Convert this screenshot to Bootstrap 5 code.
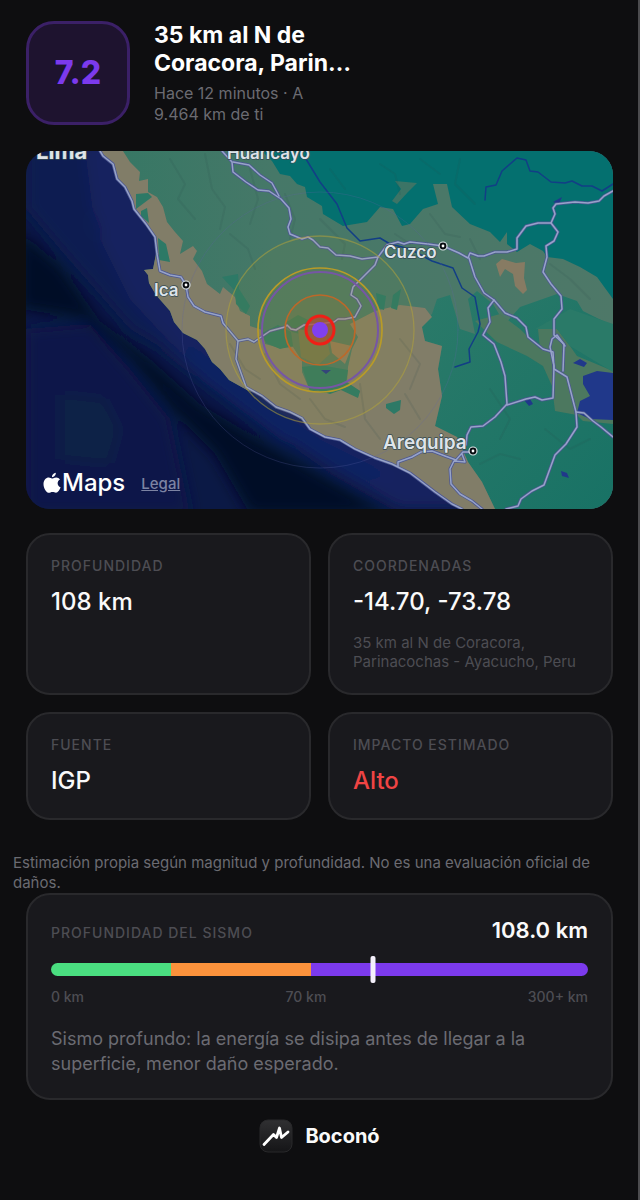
<!DOCTYPE html>
<html lang="es" data-bs-theme="dark">
<head>
<meta charset="utf-8">
<meta name="viewport" content="width=device-width, initial-scale=1">
<title>Boconó</title>
<link href="https://cdn.jsdelivr.net/npm/bootstrap@5.3.0/dist/css/bootstrap.min.css" rel="stylesheet">
<style>
body{background:#0e0e10;color:#fafafa;font-family:Inter,"Liberation Sans",sans-serif;border-right:2px solid #4b4b4e;min-height:100vh}
.page{padding:21px 25px 40px 26px}
.magnitude{width:104px;height:104px;border:3px solid #3b2067;border-radius:28px;background:#1e132f;color:#7c3aed;font-size:32px;font-weight:800;flex:none}
.place{max-width:212px}
.place h1{font-size:23px;line-height:28px;font-weight:700;margin:0 0 6px}
.ago{font-size:16px;line-height:21px;color:#6b6b72;margin:0;max-width:170px}
.map-box{border-radius:24px;overflow:hidden;margin-top:26px}
.map-box svg.terrain{display:block;width:100%;height:auto}
.map-brand{left:16px;bottom:12px;gap:16px}
.map-word{font-size:24px;line-height:28px;font-weight:500;color:#fff}
.legal{font-size:15px;font-weight:500;color:#7c83a3;padding-top:3px}
.tiles{gap:17px;margin-top:24px;display:grid;grid-template-columns:1fr 1fr}
.panel{background:#19191d;border:2px solid #29292c;border-radius:24px;padding:22px 23px}
.cap{font-size:14px;line-height:18px;font-weight:500;letter-spacing:1px;color:#4d4d53;margin:0;text-transform:uppercase}
.fact{font-size:24px;line-height:30px;font-weight:500;margin:12px 0 0}
.danger-text{color:#ef4444}
.where{font-size:15px;line-height:19px;color:#4d4d53;margin:16px 0 0}
.note{font-size:15px;line-height:20px;color:#6b6b72;margin:33px -12px 0 -13px;padding-right:24px}
.depth-now{font-size:22px;line-height:26px;font-weight:600}
.scale-bar{height:13px;margin-top:20px}
.scale-bar .zones{border-radius:7px;overflow:hidden;height:13px}
.shallow{background:#4ade80}.middle{background:#fb923c}.deep{background:#7c3aed}
.pin{top:-7px;width:5px;height:27px;border-radius:2px;background:#f4f0fb;transform:translateX(-50%)}
.ticks{font-size:14px;line-height:18px;font-weight:500;color:#4d4d53;margin-top:12px}
.explain{font-size:18px;line-height:25px;color:#6b6b72;margin:20px 0 0}
.brand-row{gap:12px;margin-top:19px;font-size:20px;line-height:28px;font-weight:700}
</style>
</head>
<body>
<main class="page container-fluid">
  <header class="d-flex gap-4">
    <div class="magnitude d-flex align-items-center justify-content-center">7.2</div>
    <div class="place">
      <h1>35 km al N de Coracora, Parin…</h1>
      <p class="ago">Hace 12 minutos · A 9.464 km de ti</p>
    </div>
  </header>

  <section class="map-box position-relative" aria-label="Mapa del epicentro">
    <svg class="terrain" viewBox="26 152 587 358" font-family="Inter, 'Liberation Sans', sans-serif" font-weight="600" fill="none" stroke-linejoin="round" stroke-linecap="round">
      <defs>
        <filter id="soft" x="-20%" y="-20%" width="140%" height="140%"><feGaussianBlur stdDeviation="7"/></filter>
        <clipPath id="land"><path d="M100 152 113 167 117 180 125 188 132 202 134 210 146 225 155 238 156 255 153 270 144 271 148 276 149 284 156 296 163 304 170 312 174 323 183 334 197 341 205 350 212 363 220 370 229 381 247 391 262 397 276 408 290 413 302 421 310 430 325 438 340 441 355 450 375 459 392 465 410 474 418 480 435 493 452 505 462 510H613V152Z"/></clipPath>
        <linearGradient id="hills" x1="0" y1="0" x2="1" y2="0"><stop offset="0" stop-color="#347764"/><stop offset=".35" stop-color="#467868"/><stop offset="1" stop-color="#4e7868"/></linearGradient>
        <linearGradient id="yungas" x1="0" y1="0" x2="1" y2="1"><stop offset="0" stop-color="#2b7a69"/><stop offset="1" stop-color="#187265"/></linearGradient>
      </defs>
      <!-- ocean -->
      <path fill="#0b1945" d="M26 152H613V510H26Z"/>
      <g filter="url(#soft)">
        <path fill="#18225f" d="M75 140 100 240 105 280 150 340 240 410 330 470 400 510H470L400 440 240 350 170 290 160 230 110 140Z"/>
        <path fill="#0d1c51" d="M26 145 85 150 95 230 130 300 190 365 130 330 60 250 26 210Z"/>
        <path fill="#020b27" d="M20 232 62 268 100 322 150 360 200 405 250 435 320 475 390 515H250L215 455 175 415 130 360 85 320 20 310Z"/>
        <path fill="#0f1748" d="M26 330 90 325 130 370 170 420 190 515H26Z"/>
        <path fill="#0c2347" d="M60 395 105 400 120 430 110 465 60 460Z"/>
        <path fill="#102164" d="M180 335 240 385 320 440 400 480 370 480 280 440 200 380Z"/>
      </g>
      <!-- land cover -->
      <g clip-path="url(#land)">
        <path fill="url(#hills)" d="M90 152H613V510H90Z"/>
        <path fill="#04706f" d="M262 152 272 162 280 175 290 177 297 185 305 188 307 198 322 207 323 215 343 227 367 223 380 208 393 210 402 227 410 225 423 210 438 205 433 185H447L452 208 470 225 490 233 500 243 507 233V245L517 253 530 245 543 252 547 258 563 260 580 268 597 278 613 300V152Z"/>
        <path fill="#3c7466" d="M395 182 417 184 408 193 397 205 392 202 401 190Z"/>
        <path fill="url(#yungas)" d="M437 300 450 296 460 330 475 335 468 300 477 292 493 305 505 325 520 308 557 295 577 302 583 312 613 327V510H495L482 483 468 463 457 438 435 427 442 397 438 370 442 347 425 342 420 325 432 315Z"/>
        <path fill="#4c785f" d="M475 322 497 343 527 357 543 367 552 387 555 412 577 416 583 422 613 425V372L577 357 570 347 557 330 538 330 540 350 520 330 500 315Z"/>
        <path fill="#2a7a68" d="M535 330H557L570 347 613 373V325L570 310Z"/>
        <path fill="#817d68" d="M90 152H123L130 163 140 173 139 182 148 180V193L157 198 163 208 167 223 175 233 183 242 180 255 193 247 197 252 193 260 202 272 207 285 220 295 223 288 235 298 240 312 250 317 250 327 262 331 265 345 280 349 293 348 302 362V373L310 392 325 394 342 387 358 398 360 392 347 383 348 368 352 350 358 338 350 325 375 312 400 306 425 309 432 318 422 328 425 342 442 347 438 370 442 397 435 427 457 438 468 463 482 483 495 510H90Z"/>
        <g fill="#2d7966">
          <path d="M136 195 148 194 152 198 136 210ZM141 212 147 209 149 224 141 217ZM158 239 166 245 170 263 159 261Z"/>
          <path d="M222 278 238 275 239 290 250 307 246 315 236 305 235 292ZM262 334 278 326 291 333 293 347 280 350 266 344Z"/>
          <path d="M302 368 320 366 348 371 346 383 360 392 358 399 341 391 330 395 318 391 310 392ZM386 405 401 401 400 411 394 415 386 409Z"/>
          <path d="M285 324 298 316 310 322 300 335 292 333ZM376 294 386 297 384 311 378 309ZM393 296 401 290 397 311 391 309Z"/>
        </g>
        <path fill="#64775a" d="M298 330 326 335 330 355 318 366 301 358Z"/>
        <path fill="#877b63" d="M496 265 502 260 516 264 525 263 524 279 527 291 523 295 515 287 513 275 505 270 500 278ZM330 342 352 347 345 365 332 354Z"/>
        <!-- relief shading -->
        <g stroke="#264e46" stroke-opacity=".12" stroke-width="2">
          <path d="M170 160 185 185 178 200 195 220M205 155 212 190 225 208 220 230M250 170 258 200 250 225M285 195 295 220 290 240M230 235 248 250 255 270M320 220 345 245 342 260M395 235 410 245M430 215 445 235 460 238M470 240 480 260M550 265 570 280 590 300"/>
          <path d="M230 345 245 370 260 380M265 355 280 385 300 400M310 400 325 420 345 428M360 385 365 420 380 440M400 340 420 365 410 390M405 395 420 420M490 390 510 420 500 440M480 465 500 455 520 460M545 430 570 450 590 440"/>
          <path d="M380 165 395 175 400 195M420 160 440 175M460 160 455 185 475 205M330 170 345 190"/>
        </g>
        <path fill="#20388a" d="M583 377 597 372 613 374V421L590 420 577 414 580 402 590 397 583 385ZM573 364 580 360 587 364 584 368ZM524 401 530 400 533 405 529 407ZM561 472 567 474 569 479 562 477ZM553 203 562 198 559 205ZM321 371 331 371 326 375Z"/>
      </g>
      <!-- rivers -->
      <g stroke="#123e86" stroke-width="1.5">
        <path d="M306 160 320 183 337 205 347 229 360 242 380 239 390 245 410 250 432 262 453 269 462 289 475 298 480 325 478 333 469 350 470 363 455 368"/>
        <path d="M485 201 486 188 496 186 502 172 517 159 526 161 530 172 538 173 551 183 565 184 572 182 582 187 592 187 602 192 613 185"/>
      </g>
      <!-- roads: dark casing, then the light line -->
      <defs>
        <g id="roads">
          <path d="M100 152 103 157 113 165 117 180 125 188 132 202 134 210 146 225 155 238 157 255 160 272 170 276 181 278 186 286 188 298 194 307 205 313 221 317 223 324 238 342 248 340 254 343 270 332 285 328 287 326 291 330 296 331 304 326 318 325 334 323 338 320 345 320 355 318 361 307 357 300 351 296 353 288 365 276 375 266 378 258"/>
          <path d="M238 342 236 360 246 388 262 397 276 408 290 413 302 419 310 430 325 438 340 441 355 450 375 459 392 465 410 474 418 480 435 493 452 505 462 510"/>
          <path d="M222 152 232 163 233 173 246 183 258 191 269 192 281 200 289 209 291 220 288 228 290 235 302 240 308 238 313 241 320 248 328 249 336 256 350 257 362 260 378 258 387 246 398 243 404 245 410 243 428 245 443 247 459 254 468 259 470 254 478 257 484 257 495 253 507 253 517 250 517 239 526 227 538 224 551 224 555 215 553 209 556 205 575 203 588 204 599 202 604 197 613 192"/>
          <path d="M233 163 249 166 260 176 272 184 279 197"/>
          <path d="M551 224 558 233 554 242 546 247 547 258 543 273 551 285 561 297 562 310 554 320 554 336 564 345 563 372"/>
          <path d="M469 259 475 278 484 294 494 301 505 314 517 319 526 328 528 338 543 350 553 353 554 370 559 373 567 378 576 413 577 428 566 445 555 456 544 486 532 492 521 500 518 507 506 510"/>
          <path d="M494 301 488 309 490 323 483 336 494 345 501 363 505 377 507 405 495 418 483 427 471 428 467 436 466 446"/>
          <path d="M507 406 526 400 535 398 542 401 553 399 554 367 550 348 552 340 557 336 565 347M576 413 584 414 593 422 601 428 613 438"/>
          <path d="M398 467 398 463 412 458 421 453 432 452 445 457 456 461 463 453 471 453M462 455 465 463 454 462 450 470 451 485 460 495 472 502 482 510"/>
        </g>
      </defs>
      <use href="#roads" stroke="#4d5793" stroke-width="3"/>
      <use href="#roads" stroke="#97a4c8" stroke-width="1.5"/>
      <!-- seismic waves -->
      <circle cx="320" cy="331" r="138" stroke="#6062a8" stroke-opacity=".25"/>
      <circle cx="320" cy="331" r="94" fill="#b09820" fill-opacity=".07" stroke="#b0a23c" stroke-opacity=".55" stroke-width="1.3"/>
      <circle cx="320" cy="331" r="62" fill="#c09b10" fill-opacity=".07" stroke="#b89b28" stroke-width="1.7"/>
      <circle cx="320" cy="331" r="58" stroke="#7656a5" stroke-width="2"/>
      <circle cx="320" cy="331" r="35" fill="#c87510" fill-opacity=".13" stroke="#bd6829" stroke-width="1.7"/>
      <circle cx="320" cy="331" r="14" fill="#b24a31" fill-opacity=".6" stroke="#f01f16" stroke-width="3"/>
      <circle cx="320" cy="331" r="8" fill="#8040f0"/>
      <!-- cities -->
      <g fill="#080c10" stroke="#dbe4e6" stroke-width="1.2"><circle cx="186" cy="286" r="4"/><circle cx="443" cy="247" r="4"/><circle cx="473" cy="452" r="4"/></g>
      <g fill="#fff"><circle cx="186" cy="286" r="1.4"/><circle cx="443" cy="247" r="1.4"/><circle cx="473" cy="452" r="1.4"/></g>
      <g fill="#dee4e9" stroke="#344951" stroke-width="1.4" paint-order="stroke">
        <text x="36" y="160" font-size="22" font-weight="700">Lima</text>
        <text x="227" y="160" font-size="17">Huancayo</text>
        <text x="154" y="297" font-size="17">Ica</text>
        <text x="384" y="259" font-size="17">Cuzco</text>
        <text x="383" y="450" font-size="19">Arequipa</text>
      </g>
    </svg>
    <div class="map-brand position-absolute d-flex align-items-center">
      <div class="d-flex align-items-center">
        <svg width="20" height="22" viewBox="-1 0 20 22" fill="#fff" aria-hidden="true"><path d="M9 6.500C10.300 6.500 11.400 5.400 13.200 5.400 14.800 5.400 16.200 6.200 17 7.500 13.500 9.400 14.100 14 17.600 15.300 16.700 17.800 14.900 20.700 13 20.700 11.700 20.700 11 20 9.500 20 7.900 20 7.100 20.800 5.800 20.800 3.400 20.800.500 16.200.500 12.200.500 8 3.100 5.500 5.800 5.500 7.100 5.500 8.100 6.500 9 6.500ZM8.900 5.200C8.800 2.900 10.700.900 12.800.700 13 3 10.900 5.100 8.900 5.200Z"/></svg>
        <span class="map-word">Maps</span>
      </div>
      <a class="legal" href="#legal">Legal</a>
    </div>
  </section>

  <section class="tiles">
    <article class="panel">
      <h2 class="cap">Profundidad</h2>
      <p class="fact">108 km</p>
    </article>
    <article class="panel">
      <h2 class="cap">Coordenadas</h2>
      <p class="fact">-14.70, -73.78</p>
      <p class="where">35 km al N de Coracora, Parinacochas - Ayacucho, Peru</p>
    </article>
    <article class="panel">
      <h2 class="cap">Fuente</h2>
      <p class="fact">IGP</p>
    </article>
    <article class="panel">
      <h2 class="cap">Impacto estimado</h2>
      <p class="fact danger-text">Alto</p>
    </article>
  </section>

  <p class="note">Estimación propia según magnitud y profundidad. No es una evaluación oficial de daños.</p>

  <section class="panel">
    <div class="d-flex justify-content-between align-items-baseline">
      <h2 class="cap">Profundidad del sismo</h2>
      <span class="depth-now">108.0 km</span>
    </div>
    <div class="scale-bar position-relative">
      <div class="zones d-flex">
        <div class="shallow" style="width:22.4%"></div>
        <div class="middle" style="width:26%"></div>
        <div class="deep flex-grow-1"></div>
      </div>
      <div class="pin position-absolute" style="left:60%"></div>
    </div>
    <div class="ticks d-flex justify-content-between"><span>0 km</span><span>70 km</span><span>300+ km</span></div>
    <p class="explain">Sismo profundo: la energía se disipa antes de llegar a la superficie, menor daño esperado.</p>
  </section>

  <footer class="brand-row d-flex align-items-center justify-content-center">
    <svg width="34" height="34" viewBox="0 0 34 34" aria-hidden="true">
      <defs><linearGradient id="tile" x1="0" y1="0" x2="0" y2="1"><stop offset="0" stop-color="#303032"/><stop offset="1" stop-color="#151517"/></linearGradient></defs>
      <rect x="1" y="1" width="32" height="32" rx="8" fill="url(#tile)" stroke="#29292b"/>
      <path d="M5 25.500 14.500 15.500 17.500 18.500 20.500 9 22.500 18.500 29 13" fill="none" stroke="#fff" stroke-width="2.800" stroke-linecap="round" stroke-linejoin="round"/>
    </svg>
    <span>Boconó</span>
  </footer>
</main>
<script src="https://cdn.jsdelivr.net/npm/bootstrap@5.3.0/dist/js/bootstrap.bundle.min.js"></script>
</body>
</html>
